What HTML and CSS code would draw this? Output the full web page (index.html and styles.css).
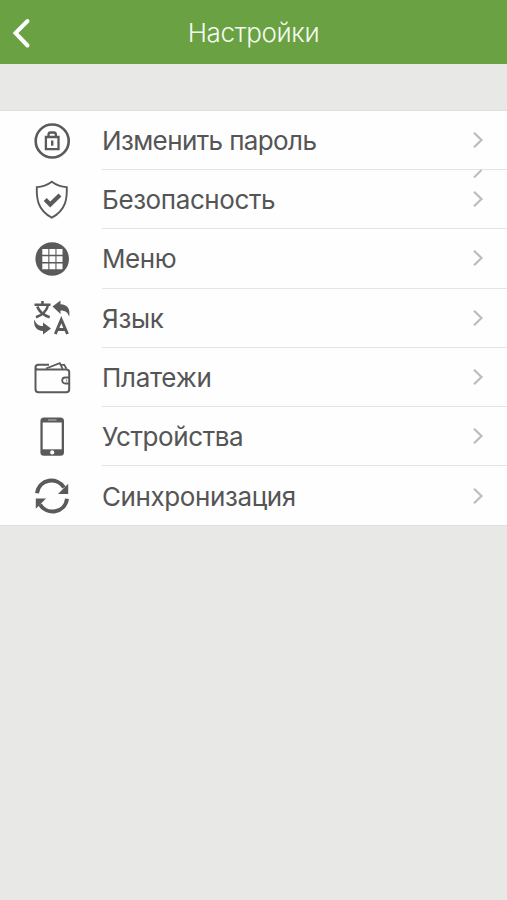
FILE: index.html
```html
<!DOCTYPE html>
<html lang="ru">
<head>
<meta charset="utf-8">
<title>Настройки</title>
<link rel="stylesheet" href="styles.css">
</head>
<body>
<header class="navbar">
  <svg class="back" viewBox="0 0 24 34"><path d="M15.500 5 3.500 17 15.500 29.500"/></svg>
  <h1 class="title">Настройки</h1>
</header>
<ul class="list">
  <li class="row">
    <svg class="icon" viewBox="0 0 40 40"><circle cx="20.200" cy="20" r="16.500" stroke-width="2.600"/><path d="M13.900 16h12.600v12.200H13.900zM16.500 16v-2.300q0-2.200 2.300-2.200h2.800q2.300 0 2.300 2.200V16" stroke-width="2.300"/><path d="M20.200 19.500v5.200" stroke-width="2.400"/></svg>
    <div class="body"><span class="label label-tight">Изменить пароль</span><svg class="chevron" viewBox="0 0 12 18"><path d="m2 1.700 7.500 7.300L2 16.300"/></svg></div>
  </li>
  <li class="row">
    <svg class="icon" viewBox="0 0 40 40"><path d="M19.800 1.700Q13 6.700 4.800 7.100C4.500 17.700 5 29.700 19.800 37.700 34.600 29.700 35.100 17.700 34.800 7.100Q26.600 6.700 19.800 1.700Z" stroke-width="1.900"/><path d="m13.200 19.500 5 5 9.800-9.400" stroke-width="4.200"/></svg>
    <div class="body"><span class="label">Безопасность</span><svg class="chevron" viewBox="0 0 12 18"><path d="m2 1.700 7.500 7.300L2 16.300"/></svg></div>
    <svg class="stray" viewBox="0 0 12 10"><path d="M2 8.500 9.500 1"/></svg>
  </li>
  <li class="row">
    <svg class="icon" viewBox="0 0 40 40"><circle class="solid" cx="20.200" cy="20" r="16.800"/><path class="tiles" d="M10.300 10h6v5.800h-6zM17.400 10h6v5.800h-6zM24.500 10h6v5.800h-6zM10.300 17.200h6V23h-6zM17.400 17.200h6V23h-6zM24.500 17.200h6V23h-6zM10.300 24.400h6v5.800h-6zM17.400 24.400h6v5.800h-6zM24.500 24.400h6v5.800h-6z"/></svg>
    <div class="body"><span class="label">Меню</span><svg class="chevron" viewBox="0 0 12 18"><path d="m2 1.700 7.500 7.300L2 16.300"/></svg></div>
  </li>
  <li class="row">
    <svg class="icon" viewBox="0 0 40 40"><path d="M2.500 6.800h16M10.500 3v3.800M5.300 8.500Q8 16 17.700 19.300M15.800 8Q13.500 16 4 19.300" stroke-width="2.600"/><path d="m23.300 36 6-14.300L35.500 36M25 31.500h9" stroke-width="2.900"/><path class="solid" d="m20.500 8.500 8-6v3.800c7 .2 10 4.500 8.700 12.400-1.500-4.500-3.700-6.100-8.700-6.200V16zM2.300 21.500c-1 6.500 2 11.200 8.700 11.500v3.500l8-6-8-6v3.600c-4.200-.1-6.500-1.600-8.700-6.600z"/></svg>
    <div class="body"><span class="label label-wide">Язык</span><svg class="chevron" viewBox="0 0 12 18"><path d="m2 1.700 7.500 7.300L2 16.300"/></svg></div>
  </li>
  <li class="row">
    <svg class="icon" viewBox="0 0 40 40"><path d="M3.500 10.300v21.900q0 3 3 3h27.700q3 0 3-3V15q0-2.500-3-2.500H6q-2.500 0-2.500-2.200 0-2.500 3-2.500H17" stroke-width="2"/><path d="m14 11.500 13.800-5.400 2.800 5.700M28.500 7.800h3.700l2.300 4M37.500 20.500h-4.300a3 3 0 0 0 0 6h4.300M34.300 23.500h.8" stroke-width="1.800"/></svg>
    <div class="body"><span class="label label-wide">Платежи</span><svg class="chevron" viewBox="0 0 12 18"><path d="m2 1.700 7.500 7.300L2 16.300"/></svg></div>
  </li>
  <li class="row">
    <svg class="icon" viewBox="0 0 40 40"><rect class="solid" x="8.400" y=".5" width="23.600" height="38.200" rx="3.500"/><path class="tiles" d="M10.700 5.500h19v26.800h-19z"/><path class="slot" d="M16 3h8.500"/><circle class="tiles" cx="20.200" cy="35.400" r="2.100"/></svg>
    <div class="body"><span class="label">Устройства</span><svg class="chevron" viewBox="0 0 12 18"><path d="m2 1.700 7.500 7.300L2 16.300"/></svg></div>
  </li>
  <li class="row">
    <svg class="icon" viewBox="0 0 40 40"><path d="M5 17.300C7 2.500 25.500.6 32 11.500M35 22.700C33 37.500 14.500 39.400 8 28.500" stroke-width="3.900"/><path class="solid" d="M36.200 7.800v10.200H26zM3.800 32.700V22.500H14z"/></svg>
    <div class="body"><span class="label">Синхронизация</span><svg class="chevron" viewBox="0 0 12 18"><path d="m2 1.700 7.500 7.300L2 16.300"/></svg></div>
  </li>
</ul>
</body>
</html>
```
FILE: styles.css
```css
* { box-sizing: border-box; }
body {
  margin: 0;
  min-height: 900px;
  background: #e8e8e6;
  color: #555;
  font-family: Inter, "Liberation Sans", sans-serif;
}
svg { display: block; fill: none; stroke: #5a5a5a; }
.navbar {
  display: grid;
  grid-template-columns: 36px 1fr 36px;
  align-items: center;
  height: 63.500px;
  padding-top: 2px;
  background: #6aa143;
}
.back {
  width: 24px;
  height: 34px;
  margin-left: 12px;
  stroke: #fff;
  stroke-width: 4;
  stroke-linecap: round;
}
.title {
  margin: 0;
  color: #f4faef;
  font-size: 26px;
  font-weight: 300;
  line-height: 32px;
  letter-spacing: -.35px;
  text-align: center;
}
.list {
  margin: 46.500px 0 0;
  padding: 0;
  list-style: none;
  background: #fefefe;
  border-top: 1px solid #dededd;
  border-bottom: 1px solid #dededd;
}
.row {
  position: relative;
  display: flex;
  align-items: center;
  height: 59.200px;
}
.icon { width: 40px; height: 40px; margin: 0 30px 0 32px; }
.solid { fill: #5a5a5a; stroke: none; }
.tiles { fill: #fefefe; stroke: none; }
.slot { stroke: #aaa; stroke-width: 1.300; }
.body {
  display: flex;
  flex: 1;
  align-items: center;
  justify-content: space-between;
  height: 100%;
  padding-right: 23px;
  border-bottom: 1px solid #e4e4e4;
}
.row:last-child .body { border-bottom: 0; }
.label {
  padding-top: 2px;
  font-size: 26px;
  line-height: 32px;
  letter-spacing: -.4px;
  white-space: nowrap;
}
.label-tight { letter-spacing: -.62px; }
.label-wide { letter-spacing: -.3px; }
.chevron { width: 12px; height: 18px; stroke: #bcbcbc; stroke-width: 2.200; }
.stray {
  position: absolute;
  top: -1px;
  right: 23px;
  width: 12px;
  height: 10px;
  stroke: #bcbcbc;
  stroke-width: 2;
}
```
